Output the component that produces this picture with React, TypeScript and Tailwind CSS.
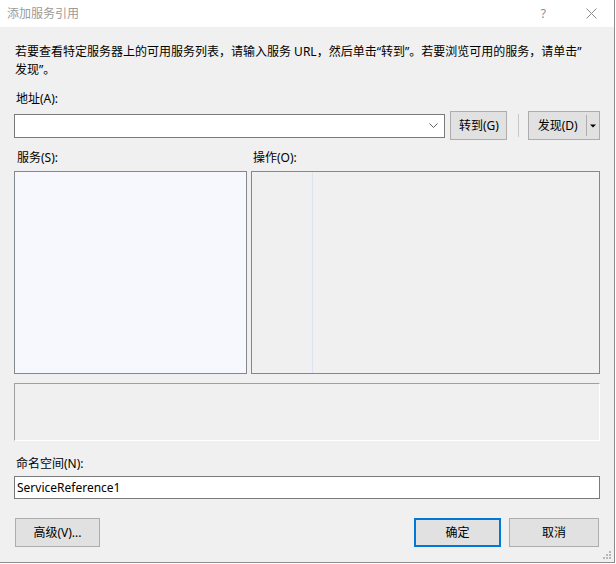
import React from 'react';

const font = '"Segoe UI", "Noto Sans", "Noto Sans CJK SC", sans-serif';

function Btn({ children, className = '' }: { children: React.ReactNode; className?: string }) {
  return (
    <button className={`h-[29px] bg-[#e1e1e1] border border-[#adadad] text-[12px] text-black flex items-center justify-center ${className}`}>
      {children}
    </button>
  );
}

export default function App() {
  return (
    <div className="w-[616px] h-[564px] bg-white" style={{ fontFamily: font }}>
      <div className="w-[615px] h-[563px] flex flex-col border-r border-b border-[#8c8c8c] bg-[#f0f0f0]">
        {/* Title bar */}
        <div className="h-[27px] bg-white flex items-center shrink-0">
          <span className="pl-[7px] text-[12px] text-[#9a9a9a]">添加服务引用</span>
          <span className="ml-auto mr-[40px] text-[12px] text-[#8a8a8a]">?</span>
          <svg width="11" height="11" viewBox="0 0 11 11" className="mr-[17px]">
            <path d="M0.5 0.5 L10.5 10.5 M10.5 0.5 L0.5 10.5" stroke="#8a8a8a" strokeWidth="1" />
          </svg>
        </div>

        <div className="flex flex-col px-[14px] text-[12px] text-black">
          <p className="pt-[16px] pl-[1px] leading-[18px] whitespace-nowrap">
            若要查看特定服务器上的可用服务列表，请输入服务 URL，然后单击“转到”。若要浏览可用的服务，请单击”
            <br />
            发现”。
          </p>

          <div className="mt-[11px] pl-[2px] leading-[18px]">地址(A):</div>

          <div className="mt-[3px] flex items-center h-[29px]">
            <div className="w-[433px] h-[24px] bg-white border border-[#7a7a7a] flex items-center justify-end pr-[6px]">
              <svg width="9" height="5" viewBox="0 0 9 5">
                <path d="M0.5 0.5 L4.5 4.5 L8.5 0.5" fill="none" stroke="#606060" strokeWidth="1" />
              </svg>
            </div>
            <Btn className="ml-[5px] w-[57px]">转到(G)</Btn>
            <div className="ml-[11px] w-px h-[23px] bg-[#c8c8c8]" />
            <div className="ml-[9px] w-[72px] h-[29px] bg-[#e1e1e1] border border-[#adadad] flex items-center">
              <span className="flex-1 text-center">发现(D)</span>
              <div className="w-px h-[21px] bg-[#adadad]" />
              <svg width="12" height="6" viewBox="0 0 12 6">
                <path d="M3 1.5 L9 1.5 L6 4.5 Z" fill="#000" />
              </svg>
            </div>
          </div>

          <div className="mt-[9px] flex leading-[18px]">
            <span className="w-[239px] pl-[3px]">服务(S):</span>
            <span>操作(O):</span>
          </div>

          <div className="mt-[4px] flex h-[203px] gap-[4px]">
            <div className="w-[233px] h-full bg-[#f6f8fe] border border-[#828790]" />
            <div className="flex-1 h-full border border-[#828790] flex">
              <div className="w-[61px] h-full border-r border-[#dbe4f3]" />
            </div>
          </div>

          <div className="mt-[9px] h-[58px] border border-[#a0a0a0] border-b-white border-r-white" />

          <div className="mt-[14px] pl-[2px] leading-[18px]">命名空间(N):</div>

          <div className="mt-[3px] h-[23px] bg-white border border-[#7a7a7a] flex items-center pl-[2px]">
            ServiceReference1
          </div>

          <div className="mt-[19px] flex">
            <Btn className="ml-[1px] w-[85px]">高级(V)...</Btn>
            <button className="ml-auto w-[87px] h-[29px] bg-[#e1e1e1] border-2 border-[#0078d7] text-[12px]">确定</button>
            <Btn className="ml-[8px] mr-[1px] w-[90px]">取消</Btn>
          </div>
        </div>

        <div className="mt-auto self-end mr-[2px] mb-[2px]">
          <svg width="9" height="9" viewBox="0 0 9 9">
            <rect x="6" y="0" width="2" height="2" fill="#b8b8b8" />
            <rect x="3" y="3" width="2" height="2" fill="#b8b8b8" />
            <rect x="6" y="3" width="2" height="2" fill="#b8b8b8" />
            <rect x="0" y="6" width="2" height="2" fill="#b8b8b8" />
            <rect x="3" y="6" width="2" height="2" fill="#b8b8b8" />
            <rect x="6" y="6" width="2" height="2" fill="#b8b8b8" />
          </svg>
        </div>
      </div>
    </div>
  );
}
